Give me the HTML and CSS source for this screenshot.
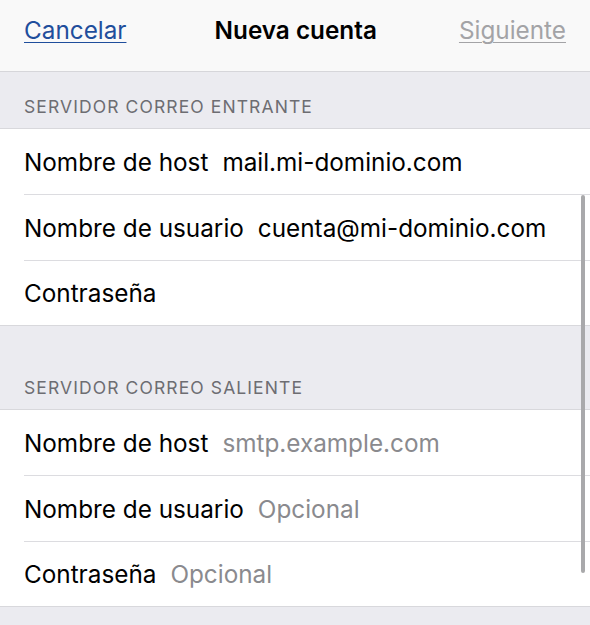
FILE: index.html
```html
<!DOCTYPE html>
<html lang="es">
<head>
  <meta charset="UTF-8">
  <title>Nueva cuenta</title>
  <link rel="stylesheet" href="styles.css">
</head>
<body>

  <div class="nav-bar">
    <a class="nav-link cancel" href="#">Cancelar</a>
    <span class="nav-title">Nueva cuenta</span>
    <a class="nav-link next" href="#">Siguiente</a>
  </div>

  <div class="form">
    <div class="section-head first">SERVIDOR CORREO ENTRANTE</div>
    <div class="group">
      <div class="row">
        <span class="label">Nombre de host</span>
        <span class="value">mail.mi-dominio.com</span>
      </div>
      <div class="row">
        <span class="label">Nombre de usuario</span>
        <span class="value">cuenta@mi-dominio.com</span>
      </div>
      <div class="row">
        <span class="label">Contraseña</span>
      </div>
    </div>

    <div class="section-head second">SERVIDOR CORREO SALIENTE</div>
    <div class="group">
      <div class="row">
        <span class="label">Nombre de host</span>
        <span class="value placeholder">smtp.example.com</span>
      </div>
      <div class="row">
        <span class="label">Nombre de usuario</span>
        <span class="value placeholder">Opcional</span>
      </div>
      <div class="row">
        <span class="label">Contraseña</span>
        <span class="value placeholder">Opcional</span>
      </div>
    </div>
    <div class="bottom-fill"></div>

    <div class="scroll-thumb"></div>
  </div>

</body>
</html>
```

FILE: styles.css
```css
body {
  font-family: Inter, "Liberation Sans", sans-serif;
  background-color: #ebebf0;
  margin: 0;
  width: 590px;
  height: 625px;
  overflow: hidden;
}

.nav-bar {
  background-color: #f9f9f9;
  height: 72px;
  border-bottom: 1px solid #d6d6da;
  display: flex;
  justify-content: space-between;
  align-items: flex-start;
  padding: 15px 24px 0;
  box-sizing: border-box;
  font-size: 24.3px;
}

.nav-link {
  text-decoration: underline;
  text-underline-offset: 3px;
  text-decoration-thickness: 1px;
}

.cancel {
  color: #1f4e9c;
}

.next {
  color: #a3a3a6;
}

.nav-title {
  font-weight: 600;
  color: #000;
  margin-left: 6px;
}

.form {
  position: relative;
}

.section-head {
  color: #6d6d72;
  font-size: 17.5px;
  letter-spacing: 1.1px;
  padding: 0 24px 11px;
  display: flex;
  align-items: flex-end;
  box-sizing: border-box;
}

.section-head.first {
  height: 56px;
}

.section-head.second {
  height: 83px;
}

.group {
  background-color: #fff;
  border-top: 1px solid #d8d8dc;
  border-bottom: 1px solid #d8d8dc;
}

.row {
  height: 66px;
  margin-left: 24px;
  display: flex;
  align-items: center;
  gap: 14px;
  font-size: 24.3px;
  color: #000;
  border-bottom: 1px solid #dcdce0;
  box-sizing: border-box;
}

.row:last-child {
  border-bottom: none;
  height: 64px;
}

.placeholder {
  color: #8a8a8e;
}

.bottom-fill {
  height: 20px;
}

.scroll-thumb {
  position: absolute;
  left: 581px;
  top: 123px;
  width: 4px;
  height: 378px;
  border-radius: 2px;
  background-color: #a9a9ab;
}
```
